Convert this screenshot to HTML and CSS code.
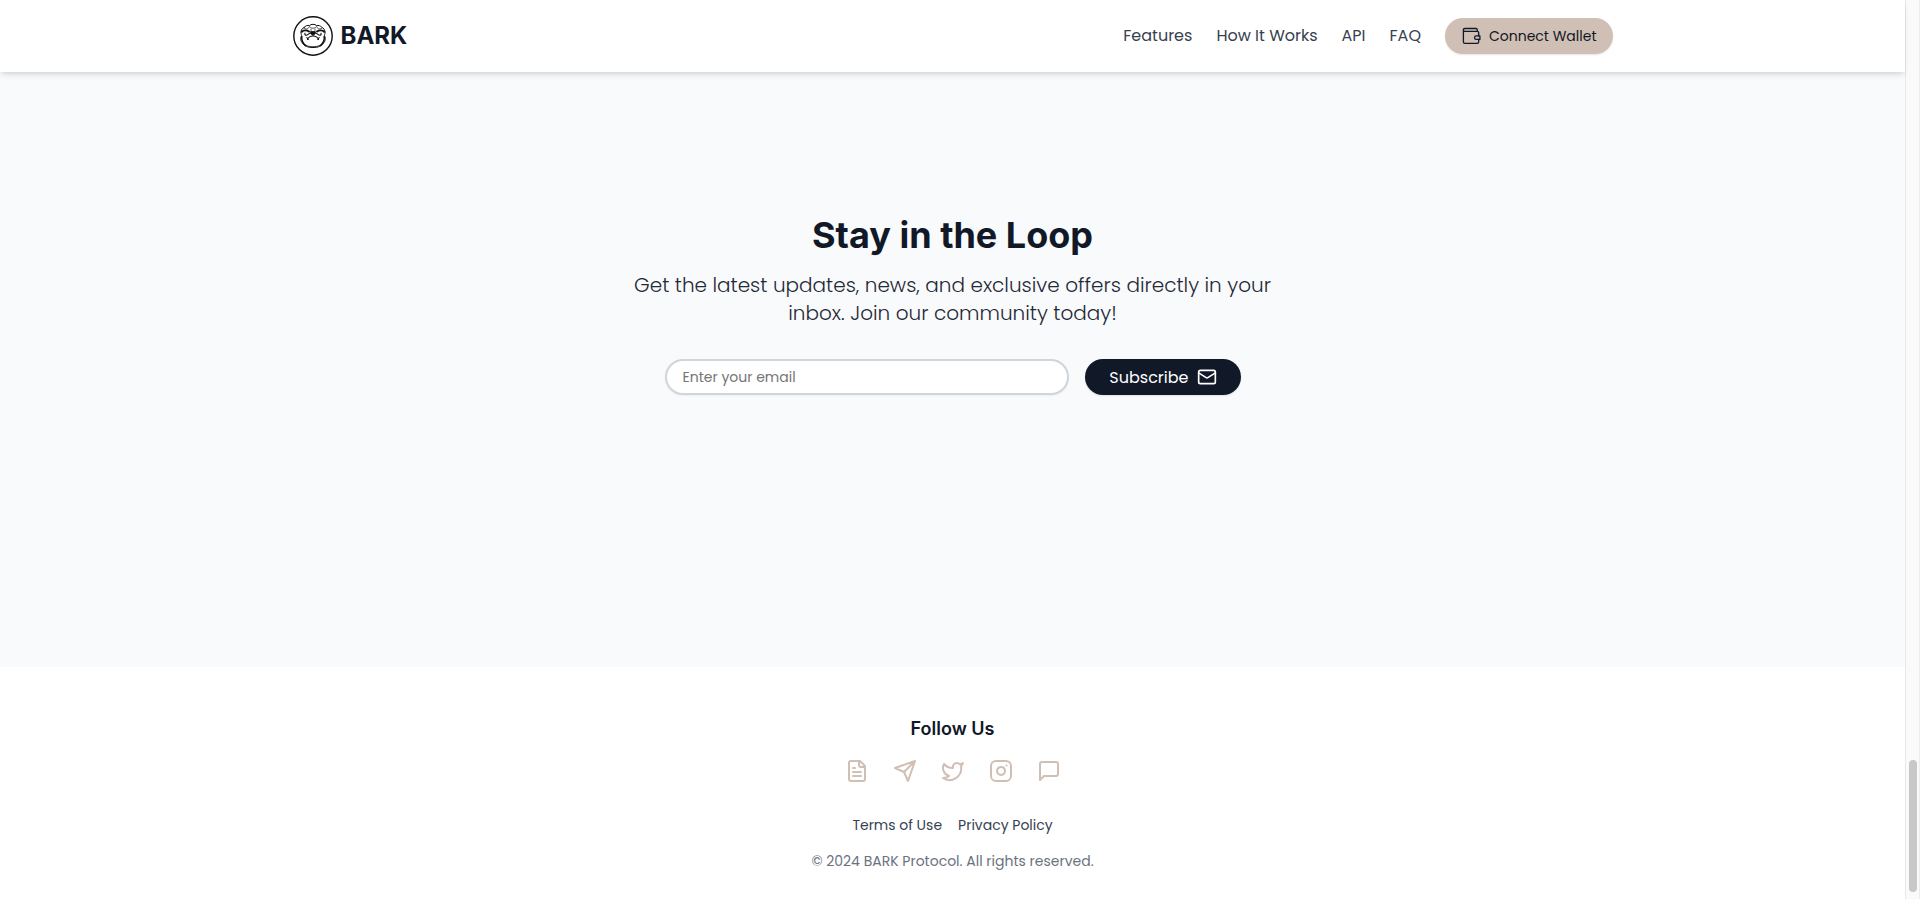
FILE: index.html
```html
<!DOCTYPE html>
<html lang="en">
<head>
<meta charset="utf-8">
<meta name="viewport" content="width=device-width, initial-scale=1">
<title>BARK Protocol</title>
<link rel="stylesheet" href="styles.css">
</head>
<body>
<div class="shell">
  <div class="page">
    <header class="header">
      <div class="header-inner">
        <a class="brand" href="#">
          <svg class="brand-mark" viewBox="0 0 40 40" fill="none" stroke="#111" stroke-linecap="round" stroke-linejoin="round" aria-hidden="true">
            <circle cx="20" cy="20" r="19.2" stroke-width="1.400"/>
            <path d="M11 11.500c1.500-1.800 3.500-2.300 5.500-2 1.500-1.600 5.500-1.600 7 0 2-.3 4 .2 5.500 2 1.500.5 2.500 2 3 4 .5 1.500-.5 2.500-.5 4 1.300 3 1 5.500-1 7.500-1.500 3-5 4.500-10.500 4.500s-9-1.500-10.500-4.500c-2-2-2.300-4.500-1-7.500 0-1.500-1-2.500-.5-4 .5-2 1.500-3.500 3-4z" stroke-width="1"/>
            <path d="M8.800 15.800c1.500-1.800 5-2 7.200-.3M31.200 15.800c-1.500-1.800-5-2-7.200-.3" stroke-width="1.900"/>
            <path d="M11.500 12.500c2 .8 4 .6 5-2M28.500 12.500c-2 .8-4 .6-5-2M17.500 11.500c1.500 1 3.500 1 5 0M18 13v1.500M22 13v1.500" stroke-width=".7"/>
            <path d="M17.800 15.500h4.400v2.300l-2.200 1.700-2.200-1.700z" fill="#111" stroke-width=".8"/>
            <path d="M17.500 17c-1.500 0-2 2-4 2.200-1.500 0-2-1-1.500-2M22.500 17c1.500 0 2 2 4 2.200 1.500 0 2-1 1.500-2" stroke-width="1.100"/>
            <path d="M20 20c-2.500 0-4.500 1-5.500 3.500M20 20c2.500 0 4.500 1 5.500 3.500M13.800 21.500l1.500 1.800M26.200 21.500l-1.500 1.800" stroke-width="1.100"/>
            <path d="M8.800 20.500c-.5 4 1 7 4 9M31.200 20.500c.5 4-1 7-4 9" stroke-width="1.500"/>
            <path d="M13.500 29.500c3 1.800 10 1.800 13 0" stroke-width=".9"/>
          </svg>
          <span class="brand-name">BARK</span>
        </a>
        <nav class="nav" aria-label="Main">
          <a class="nav-link" href="#features">Features</a>
          <a class="nav-link" href="#how">How It Works</a>
          <a class="nav-link" href="#api">API</a>
          <a class="nav-link" href="#faq">FAQ</a>
          <button class="button button-wallet" type="button">
            <svg class="icon-small" viewBox="0 0 20 20" fill="none" stroke="currentColor" stroke-width="1.300" stroke-linejoin="round" stroke-linecap="round" aria-hidden="true">
              <path d="M16.300 5.200V3.800c0-.8-.5-1.300-1.300-1.300H3.800a1.400 1.400 0 0 0 0 2.900h12.400c1 0 1.500.5 1.500 1.400v3.100M2.400 3.900v11.900c0 1 .6 1.600 1.600 1.600h12.200c1 0 1.500-.6 1.500-1.600v-2.300"/>
              <path d="M18.900 9.900h-3.600a1.700 1.700 0 0 0 0 3.500h3.600z"/>
            </svg>
            <span>Connect Wallet</span>
          </button>
        </nav>
      </div>
    </header>
    <main class="newsletter">
      <h2 class="title">Stay in the Loop</h2>
      <p class="lead">Get the latest updates, news, and exclusive offers directly in your inbox. Join our community today!</p>
      <form class="form">
        <input class="email" type="email" placeholder="Enter your email" aria-label="Email address">
        <button class="button button-subscribe" type="submit">
          <span>Subscribe</span>
          <svg class="icon-small" viewBox="0 0 24 24" fill="none" stroke="currentColor" stroke-width="2" stroke-linecap="round" stroke-linejoin="round" aria-hidden="true"><rect x="2" y="4" width="20" height="16" rx="2"/><path d="m22 7-8.970 5.700a1.940 1.940 0 0 1-2.060 0L2 7"/></svg>
        </button>
      </form>
    </main>
    <footer class="footer">
      <h3 class="follow">Follow Us</h3>
      <div class="social">
        <a class="social-link" href="#docs" aria-label="Docs"><svg class="icon" viewBox="0 0 24 24"><path d="M15 2H6a2 2 0 0 0-2 2v16a2 2 0 0 0 2 2h12a2 2 0 0 0 2-2V7Z"/><path d="M14 2v4a2 2 0 0 0 2 2h4M10 9H8M16 13H8M16 17H8"/></svg></a>
        <a class="social-link" href="#telegram" aria-label="Telegram"><svg class="icon" viewBox="0 0 24 24"><path d="m22 2-7 20-4-9-9-4ZM22 2 11 13"/></svg></a>
        <a class="social-link" href="#twitter" aria-label="Twitter"><svg class="icon" viewBox="0 0 24 24"><path d="M22 4s-.7 2.100-2 3.400c1.600 10-9.400 17.300-18 11.600 2.200.1 4.400-.6 6-2C3 15.500.5 9.600 3 5c2.200 2.600 5.600 4.100 9 4-.9-4.200 4-6.600 7-3.800 1.100 0 3-1.200 3-1.200z"/></svg></a>
        <a class="social-link" href="#instagram" aria-label="Instagram"><svg class="icon" viewBox="0 0 24 24"><rect x="2" y="2" width="20" height="20" rx="5"/><path d="M16 11.370A4 4 0 1 1 12.630 8 4 4 0 0 1 16 11.370zM17.500 6.500h.01"/></svg></a>
        <a class="social-link" href="#chat" aria-label="Chat"><svg class="icon" viewBox="0 0 24 24"><path d="M21 15a2 2 0 0 1-2 2H7l-4 4V5a2 2 0 0 1 2-2h14a2 2 0 0 1 2 2z"/></svg></a>
      </div>
      <div class="legal">
        <a class="legal-link" href="#terms">Terms of Use</a>
        <a class="legal-link" href="#privacy">Privacy Policy</a>
      </div>
      <p class="copyright">© 2024 BARK Protocol. All rights reserved.</p>
    </footer>
  </div>
  <div class="scrollbar" aria-hidden="true"><div class="scrollbar-thumb"></div></div>
</div>
</body>
</html>
```
FILE: styles.css
```css
* { box-sizing: border-box; }
body { margin: 0; font-family: Poppins, Inter, sans-serif; font-size: 16px; line-height: 24px; color: #111827; background: #fff; }
h2, h3, p { margin: 0; }
a { color: inherit; text-decoration: none; }
svg { display: block; }
.shell { display: flex; min-height: 100vh; }
.page { flex: 1; display: flex; flex-direction: column; min-width: 0; }

.header { position: relative; background: #fff; box-shadow: 0 4px 6px -1px rgba(0,0,0,.1), 0 2px 4px -2px rgba(0,0,0,.1); }
.header-inner { display: flex; align-items: center; justify-content: space-between; max-width: 1352px; margin: 0 auto; padding: 16px; }
.brand { display: flex; align-items: center; gap: 8px; height: 40px; }
.brand-mark { width: 40px; height: 40px; }
.brand-name { font-family: Inter, sans-serif; font-size: 24px; line-height: 32px; font-weight: 700; }
.nav { display: flex; align-items: center; gap: 24px; }
.nav-link { color: #374151; }
.button { display: flex; align-items: center; gap: 8px; height: 36px; border: 0; border-radius: 18px; font-family: inherit; cursor: pointer; box-shadow: 0 1px 2px rgba(0,0,0,.1); }
.button-wallet { padding: 0 16px; background: #d0bfb4; color: #111827; font-size: 14px; }
.button-subscribe { padding: 0 24px; background: #111827; color: #fff; font-size: 16px; }
.icon-small { width: 20px; height: 20px; }

.newsletter { flex: 1; display: flex; flex-direction: column; align-items: center; padding: 143px 16px 32px; background: #f9fafb; text-align: center; }
.title { font-family: Inter, sans-serif; font-size: 36px; line-height: 40px; font-weight: 700; }
.lead { max-width: 672px; margin-top: 16px; font-size: 20px; line-height: 28px; font-weight: 300; color: #1f2937; }
.form { display: flex; gap: 16px; width: 100%; max-width: 576px; margin-top: 32px; }
.email { flex: 1; min-width: 0; height: 36px; padding: 0 16px; border: 2px solid #d1d5db; border-radius: 18px; background: #fff; font-family: inherit; font-size: 14px; box-shadow: 0 1px 2px rgba(0,0,0,.05); }
.email::placeholder { color: #757575; opacity: 1; }

.footer { display: flex; flex-direction: column; align-items: center; padding: 48px 16px 28px; background: #fff; }
.follow { font-family: Inter, sans-serif; font-size: 18px; line-height: 28px; font-weight: 600; }
.social { display: flex; gap: 24px; margin-top: 16px; color: #d0bfb4; }
.icon { width: 24px; height: 24px; fill: none; stroke: currentColor; stroke-width: 2; stroke-linecap: round; stroke-linejoin: round; }
.legal { display: flex; gap: 16px; margin-top: 32px; font-size: 14px; line-height: 20px; color: #374151; }
.copyright { margin-top: 16px; font-size: 14px; line-height: 20px; color: #6b7280; }

.scrollbar { display: flex; flex-direction: column; justify-content: flex-end; align-items: center; width: 15px; padding-bottom: 7px; background: #fafafa; border-left: 1px solid #e8e8e8; border-right: 1px solid #ededed; }
.scrollbar-thumb { width: 8px; height: 132px; border-radius: 4px; background: #c8c8c8; }
```
